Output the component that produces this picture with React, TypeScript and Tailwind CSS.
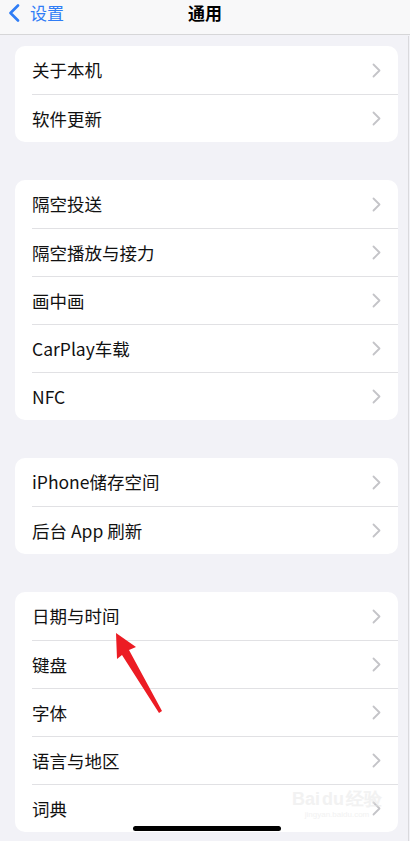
import React from "react";

const groups: string[][] = [
  ["关于本机", "软件更新"],
  ["隔空投送", "隔空播放与接力", "画中画", "CarPlay车载", "NFC"],
  ["iPhone储存空间", "后台 App 刷新"],
  ["日期与时间", "键盘", "字体", "语言与地区", "词典"],
];

function Chevron() {
  return (
    <svg width="9" height="15" viewBox="0 0 9 15" className="shrink-0">
      <path d="M1.5 1.5 L7.5 7.5 L1.5 13.5" fill="none" stroke="#c4c4c8" strokeWidth="1.8" strokeLinecap="round" strokeLinejoin="round" />
    </svg>
  );
}

export default function App() {
  return (
    <div
      className="relative w-[410px] h-[841px] overflow-hidden bg-[#f2f2f7]"
      style={{ fontFamily: '"Noto Sans CJK SC", "Noto Sans", sans-serif' }}
    >
      {/* header */}
      <div className="relative h-[35px] bg-[#f8f8f9] border-b border-[#d6d6d8]">
        <div className="absolute left-[8px] top-[4px]">
          <svg width="12" height="18" viewBox="0 0 12 18">
            <path d="M10 1.5 L2.5 9 L10 16.5" fill="none" stroke="#2f7df6" strokeWidth="2.6" strokeLinecap="round" strokeLinejoin="round" />
          </svg>
        </div>
        <span className="absolute left-[30px] top-0 text-[17px] leading-[25px] text-[#2f7df6]">设置</span>
        <div className="absolute left-0 right-0 top-0 text-center text-[17px] leading-[25px] font-semibold text-black">通用</div>
      </div>

      {/* scroll indicator line */}
      <div className="absolute right-[1px] top-[36px] bottom-0 w-[1px] bg-[#d9d9dd]" />

      <div className="flex flex-col gap-[38px] pt-[11px] pl-[15px] pr-[12px]">
        {groups.map((g, gi) => (
          <div key={gi} className="bg-white rounded-[10px] overflow-hidden">
            {g.map((item, i) => (
              <div key={item} className="flex">
                <div className="w-[17px] shrink-0" />
                <div
                  className={
                    "flex-1 h-[48px] flex items-center justify-between pr-[17px] " +
                    (i > 0 ? "border-t border-[#e1e1e4]" : "")
                  }
                >
                  <span className="text-[17.5px] text-[#111] leading-none">{item}</span>
                  <Chevron />
                </div>
              </div>
            ))}
          </div>
        ))}
      </div>

      {/* watermark */}
      <div className="absolute left-[292px] top-[790px] flex flex-col items-center leading-none opacity-50">
        <span className="text-[18px] font-bold text-[#e6e6e6]" style={{ fontFamily: '"Liberation Sans", sans-serif' }}>
          Bai<span className="mx-[2px]">du</span>经验
        </span>
        <span className="text-[8px] text-[#e6e6e6] mt-[3px]" style={{ fontFamily: '"Liberation Sans", sans-serif' }}>
          jingyan.baidu.com
        </span>
      </div>

      {/* red arrow annotation */}
      <svg className="absolute left-0 top-0" width="410" height="841" viewBox="0 0 410 841">
        <polygon points="116,633 136,647 129,650 162,711 159,713 122,655 117,659" fill="#ec1c24" />
      </svg>

      {/* home indicator */}
      <div className="absolute left-[133px] top-[826px] w-[148px] h-[5px] rounded-full bg-black" />
    </div>
  );
}
